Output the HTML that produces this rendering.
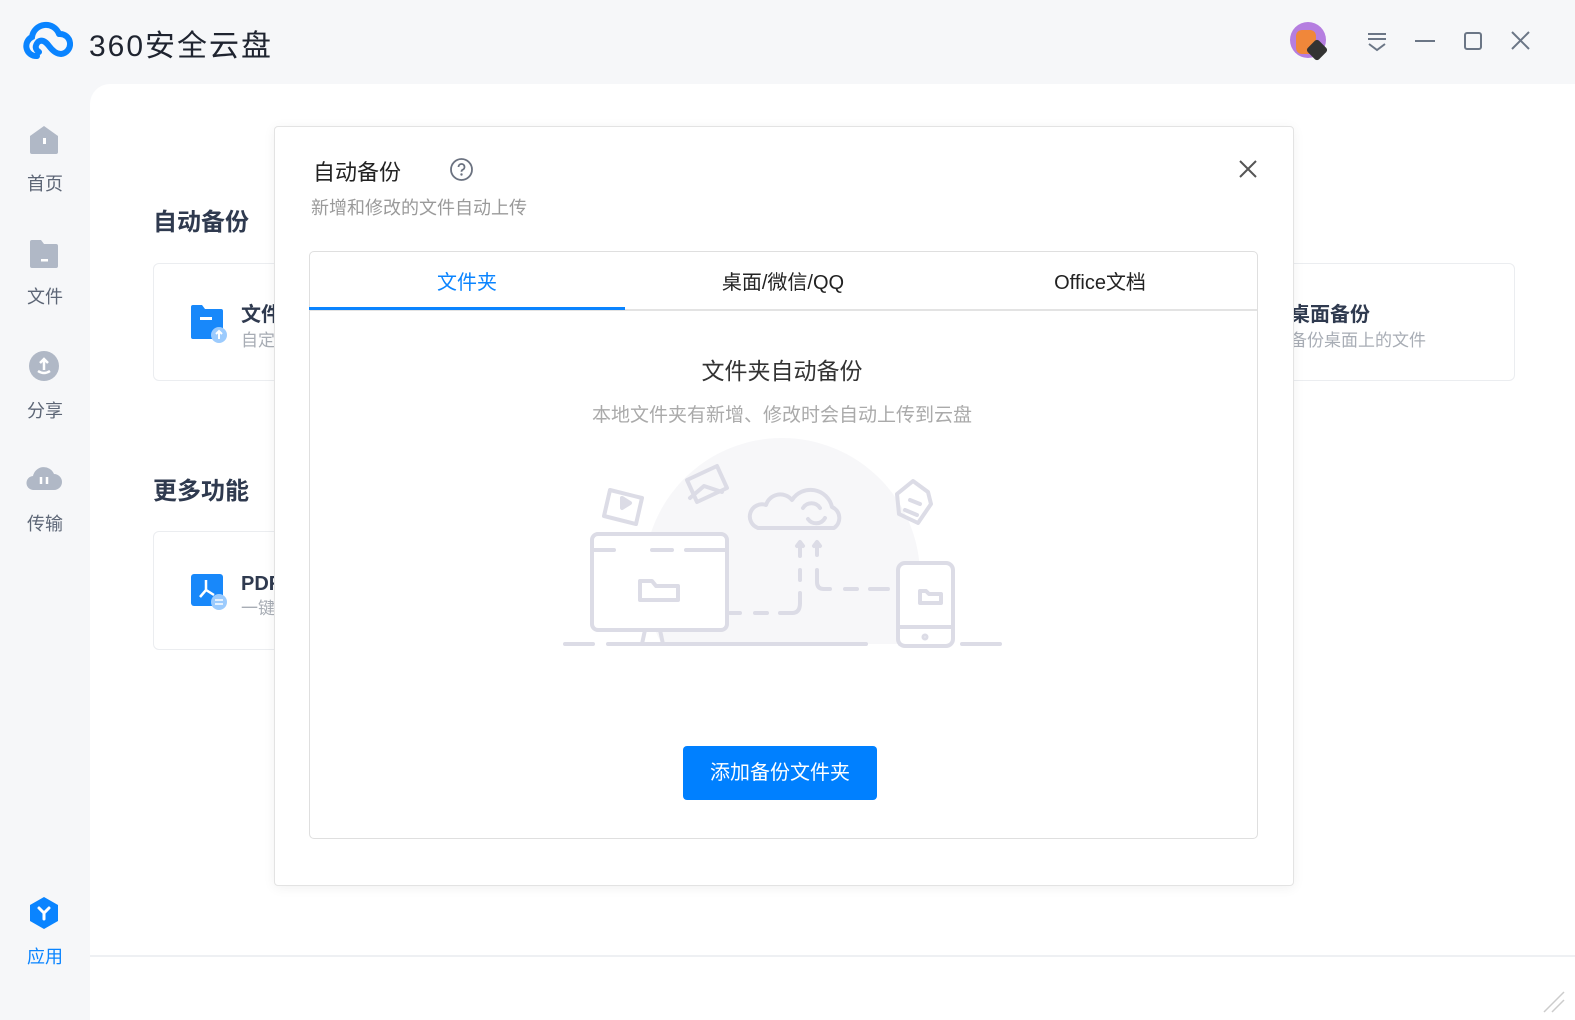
<!DOCTYPE html>
<html><head><meta charset="utf-8"><style>
*{margin:0;padding:0;box-sizing:border-box}
body{width:1575px;height:1020px;background:#f6f7f9;font-family:"Liberation Sans","Noto Sans CJK SC",sans-serif;position:relative;overflow:hidden}
.a{position:absolute}
.main{left:90px;top:84px;width:1485px;height:936px;background:#fff;border-top-left-radius:20px}
.nav{left:0;width:90px;text-align:center;font-size:18px;color:#5d6676}
.card{border:1px solid #ebedf0;border-radius:6px;background:#fff}
.h{font-size:24px;font-weight:bold;color:#2f3a4f}
.dlg{left:274px;top:126px;width:1020px;height:760px;background:#fff;border:1px solid #e3e3e3;border-radius:4px;box-shadow:0 2px 12px rgba(0,0,0,.06)}
.tab{top:266px;font-size:20px;color:#222;width:316px;text-align:center}
</style></head><body>
<svg class="a" style="left:23px;top:20px" width="50" height="40" viewBox="0 0 50 40"><path d="M14 36 A10 10 0 0 1 9 17 A14 14 0 0 1 36 14 M36 14 A9 9 0 1 1 38 34 Q32 34 26 26 Q20 18 15 22 Q10 28 16 32" fill="none" stroke="#0a84ff" stroke-width="6" stroke-linecap="round"/></svg>
<div class="a" style="left:89px;top:21px;font-size:30px;color:#1f2430;letter-spacing:2px">360安全云盘</div>
<div class="a" style="left:1290px;top:22px;width:36px;height:36px;border-radius:50%;background:#b57ee0"></div>
<div class="a" style="left:1296px;top:30px;width:20px;height:24px;border-radius:6px;background:#f0873a"></div>
<div class="a" style="left:1309px;top:42px;width:16px;height:16px;background:#333;transform:rotate(45deg);border-radius:3px"></div>
<svg class="a" style="left:1360px;top:26px" width="200" height="30"><g stroke="#6b7686" stroke-width="2" fill="none"><path d="M8 8h18M8 13h18M9 18l8 6 8-6"/><path d="M55 15h20"/><rect x="105" y="7" width="16" height="16" rx="2"/><path d="M152 6l17 17M169 6l-17 17"/></g></svg>

<div class="a main"></div>
<div class="a" style="left:90px;top:955px;width:1485px;height:2px;background:#eef0f3"></div>
<svg class="a" style="left:1540px;top:988px" width="28" height="28"><path d="M4 24L24 4M12 24L24 12" stroke="#ccc" stroke-width="1.5"/></svg>

<svg class="a" style="left:28px;top:124px" width="32" height="32"><path d="M2 12L16 2 30 12V28Q30 30 28 30H4Q2 30 2 28Z" fill="#b0b8c6"/><rect x="15" y="14" width="3" height="6" fill="#fff"/></svg>
<div class="a nav" style="top:170px">首页</div>
<svg class="a" style="left:28px;top:238px" width="32" height="32"><path d="M2 4Q2 2 4 2H13L16 6H28Q30 6 30 8V28Q30 30 28 30H4Q2 30 2 28Z" fill="#b0b8c6"/><rect x="13" y="21" width="7" height="2.5" fill="#fff"/></svg>
<div class="a nav" style="top:283px">文件</div>
<svg class="a" style="left:28px;top:350px" width="32" height="32"><circle cx="16" cy="16" r="15" fill="#b0b8c6"/><path d="M16 20V9M12 13l4-4 4 4M10 21q6 4 12 0" stroke="#fff" stroke-width="2.5" fill="none"/></svg>
<div class="a nav" style="top:397px">分享</div>
<svg class="a" style="left:26px;top:462px" width="36" height="32"><path d="M8 28A7 7 0 0 1 7 14A11 11 0 0 1 28 12A8 8 0 0 1 28 28Z" fill="#b0b8c6"/><path d="M15 15v7M21 15v7" stroke="#fff" stroke-width="2.5"/></svg>
<div class="a nav" style="top:510px">传输</div>
<svg class="a" style="left:28px;top:896px" width="32" height="34"><path d="M16 1L30 9V25L16 33 2 25V9Z" fill="#0a84ff"/><path d="M11 12l5 5 5-5M16 17v6" stroke="#fff" stroke-width="3" fill="none" stroke-linecap="round"/></svg>
<div class="a nav" style="top:943px;color:#0a84ff">应用</div>

<div class="a h" style="left:153px;top:202px">自动备份</div>
<div class="a card" style="left:153px;top:263px;width:400px;height:118px"></div>
<svg class="a" style="left:190px;top:303px" width="40" height="42"><path d="M1 4Q1 2 3 2H12L15 6H31Q33 6 33 8V34Q33 36 31 36H3Q1 36 1 34Z" fill="#1888fa"/><rect x="10" y="14" width="12" height="3" fill="#fff"/><circle cx="29" cy="32" r="8" fill="#9ccbfd"/><path d="M29 36v-7M26 31l3-3 3 3" stroke="#fff" stroke-width="2" fill="none"/></svg>
<div class="a" style="left:241px;top:298px;font-size:20px;font-weight:bold;color:#2f3a4f">文件夹备份</div>
<div class="a" style="left:241px;top:326px;font-size:17px;color:#a8adb5">自定义备份文件夹</div>
<div class="a card" style="left:1100px;top:263px;width:415px;height:118px"></div>
<div class="a" style="left:1290px;top:298px;font-size:20px;font-weight:bold;color:#2f3a4f">桌面备份</div>
<div class="a" style="left:1290px;top:326px;font-size:17px;color:#a8adb5">备份桌面上的文件</div>
<div class="a h" style="left:153px;top:471px">更多功能</div>
<div class="a card" style="left:153px;top:531px;width:400px;height:119px"></div>
<svg class="a" style="left:190px;top:573px" width="40" height="40"><rect x="1" y="1" width="32" height="32" rx="3" fill="#1888fa"/><path d="M16 7v10M10 24l6-7 8 5" stroke="#fff" stroke-width="2.5" fill="none"/><circle cx="29" cy="29" r="8" fill="#9ccbfd"/><path d="M25 27h8M25 31h8" stroke="#fff" stroke-width="1.5"/></svg>
<div class="a" style="left:241px;top:567px;font-size:20px;font-weight:bold;color:#2f3a4f">PDF转换</div>
<div class="a" style="left:241px;top:594px;font-size:17px;color:#a8adb5">一键转换</div>

<div class="a dlg"></div>
<div class="a" style="left:313px;top:155px;font-size:22px;color:#222">自动备份</div>
<svg class="a" style="left:449px;top:157px" width="25" height="25"><circle cx="12.5" cy="12.5" r="10.5" stroke="#6b7280" stroke-width="1.8" fill="none"/><path d="M9.5 10a3 3 0 1 1 4 2.8q-1 .5-1 2" stroke="#6b7280" stroke-width="1.8" fill="none"/><circle cx="12.5" cy="17.5" r="1.2" fill="#6b7280"/></svg>
<svg class="a" style="left:1238px;top:159px" width="20" height="20"><path d="M2 2l16 16M18 2L2 18" stroke="#555" stroke-width="2"/></svg>
<div class="a" style="left:311px;top:194px;font-size:18px;color:#9a9a9a">新增和修改的文件自动上传</div>
<div class="a" style="left:309px;top:251px;width:949px;height:588px;border:1.5px solid #dfdfdf;border-radius:5px"></div>
<div class="a" style="left:310px;top:309px;width:947px;height:1.5px;background:#e3e3e3"></div>
<div class="a" style="left:309px;top:307px;width:316px;height:3px;background:#0a84ff"></div>
<div class="a tab" style="left:309px;color:#0a84ff">文件夹</div>
<div class="a tab" style="left:625px">桌面/微信/QQ</div>
<div class="a tab" style="left:942px">Office文档</div>
<div class="a" style="left:482px;top:352px;width:600px;text-align:center;font-size:23px;color:#333">文件夹自动备份</div>
<div class="a" style="left:432px;top:400px;width:700px;text-align:center;font-size:19px;color:#aaa">本地文件夹有新增、修改时会自动上传到云盘</div>
<svg class="a" style="left:560px;top:430px" width="450" height="230" viewBox="0 0 450 230">
<defs><clipPath id="c"><rect x="0" y="0" width="450" height="214"/></clipPath></defs>
<circle cx="222" cy="146" r="138" fill="#f7f7f9" clip-path="url(#c)"/>
<g fill="none" stroke="#dcdce6" stroke-width="4" stroke-linecap="round" stroke-linejoin="round">
<path d="M5 214h28M48 214h258M340 214h8M402 214h38"/>
<rect x="32" y="104" width="135" height="96" rx="6" fill="#fff"/>
<path d="M34 120h20M92 120h20M126 120h39"/>
<path d="M85 200l-3 14M100 200l3 14"/>
<path d="M80 170V151h12l4 5h22v14z"/>
<path d="M170 183h10M195 183h12M220 183h12q8 0 8-10v-10M240 150v-10M240 126v-10"/>
<path d="M237 116l3-4 3 4M254 116l3-4 3 4"/>
<path d="M257 115v10M257 140v12q0 7 7 7h6M285 159h12M310 159h18"/>
<rect x="338" y="133" width="55" height="83" rx="7" fill="#fff"/>
<path d="M340 197h51"/><circle cx="365" cy="207" r="1.5"/>
<path d="M360 173v-12h6l3 3h12v9z"/>
<path d="M198 98a12 12 0 0 1 8-23a15 15 0 0 1 26-5a22 22 0 0 1 40 7a12 12 0 0 1 2 21z"/>
<path d="M243 78a10 10 0 0 1 17 0M265 88a10 10 0 0 1-17 1"/>
<path d="M50 60l32 8-6 26-32-8z"/>
<path d="M62 68l8 5-8 5z" fill="#dcdce6"/>
<path d="M127 50l30-14 10 22-30 14z M130 68l14-12 18 6"/>
<path d="M337 64l16 -13 15 11 3 12-13 19-19-9z M350 70l10 4M345 80l12 5"/>
</g></svg>
<div class="a" style="left:683px;top:746px;width:194px;height:54px;background:#0080ff;border-radius:4px;color:#fff;font-size:20px;text-align:center;line-height:54px">添加备份文件夹</div>
</body></html>
